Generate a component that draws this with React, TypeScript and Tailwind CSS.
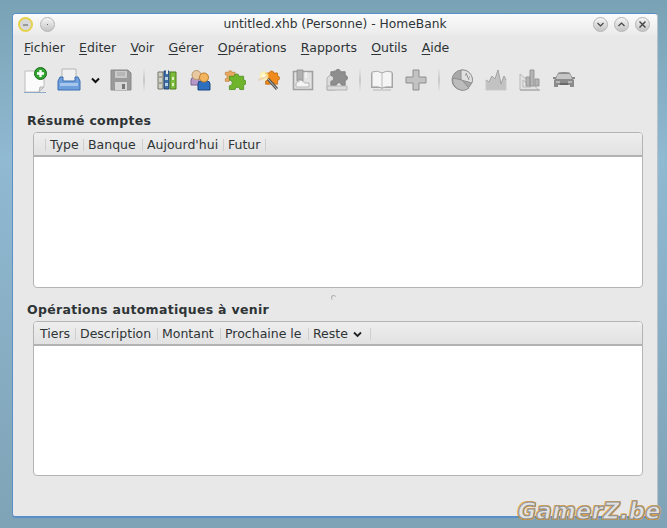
const font = '[font-family:"DejaVu_Sans",sans-serif]';

const Sep = ({ w }: { w: string }) => (
  <div className={`${w} flex justify-center`}>
    <div className="h-[24px] w-[2px] bg-gradient-to-b from-[#e8e8e8] via-[#c8c8c8] to-[#e8e8e8]" />
  </div>
);

const Slot = ({ children }: { children: React.ReactNode }) => (
  <div className="flex h-[34px] w-[34px] items-center justify-center">{children}</div>
);

const NewIcon = () => (
  <svg width="26" height="26" viewBox="0 0 26 26">
    <path d="M3 4h12l7 6v10l-5 5H3z" fill="#fbfbfb" stroke="#bdbdbd" />
    <path d="M17 25l1-5 4 0z" fill="#d8d8d8" stroke="#b5b5b5" />
    <path d="M2 25.5h22" stroke="#8fa8c8" />
    <circle cx="18.5" cy="6.5" r="6" fill="#2fa52f" stroke="#1c6a1c" />
    <path d="M18.5 3v7M15 6.5h7" stroke="#fff" strokeWidth="2.4" />
  </svg>
);
const PrintIcon = () => (
  <svg width="24" height="24" viewBox="0 0 24 24">
    <path d="M5 1h14v13H5z" fill="#f1f1f1" stroke="#b5b5b5" />
    <path d="M3 9h3v4h12V9h3l2 4v9H1v-9z" fill="#6d9fdc" stroke="#3d6fb0" />
    <path d="M3 15h18v3H3z" fill="#a7c6ec" />
  </svg>
);
const SaveIcon = () => (
  <svg width="22" height="22" viewBox="0 0 22 22">
    <path d="M1 1h17l3 3v17H1z" fill="#9a9a9a" stroke="#8a8a8a" />
    <path d="M5 2h12v7H5z" fill="#c9c9c9" />
    <path d="M7 4h8M7 6h8" stroke="#a5a5a5" />
    <path d="M5 13h12v8H5z" fill="#d6d6d6" />
    <path d="M12 15h3v5h-3z" fill="#777" />
  </svg>
);
const BooksIcon = () => (
  <svg width="20" height="22" viewBox="0 0 20 22">
    <path d="M1 3h5v17H1z" fill="#cfcfc4" stroke="#77776c" />
    <path d="M7 2h5v18H7z" fill="#3f6ea8" stroke="#23456f" />
    <path d="M13 3h6v17h-6z" fill="#7fbe3c" stroke="#4c7c1c" />
    <path d="M2 8h3M2 14h3" stroke="#77776c" />
    <path d="M8 8h3v3H8zM8 14h3v3H8z" fill="#b8cfe8" />
    <path d="M15 8h2v3h-2zM15 14h2v3h-2z" fill="#dff0c4" />
    <path d="M9 1h2v4H9z" fill="#e8e8e8" />
  </svg>
);
const PeopleIcon = () => (
  <svg width="22" height="22" viewBox="0 0 22 22">
    <path d="M1 11q0-3 4-3h4v8H1z" fill="#b598c8" stroke="#7d6292" />
    <circle cx="6.5" cy="6" r="4.5" fill="#e8c8a0" stroke="#b8986c" />
    <path d="M8 15q0-3 3-3h6q3 0 3 3v6H8z" fill="#2f6fc0" stroke="#1b4680" />
    <circle cx="14" cy="8.5" r="4.5" fill="#f2b45c" stroke="#b87a28" />
  </svg>
);
const puzzle = "M2 5h5a2.5 2.5 0 1 1 5 0h5v4a2.5 2.5 0 1 1 0 5v5h-4a2.5 2.5 0 1 0-5 0H2v-4a2.5 2.5 0 1 0 0-6z";
const PuzzleIcon = () => (
  <svg width="22" height="22" viewBox="0 0 22 22">
    <g transform="translate(0 0) scale(.65)"><path d={puzzle} fill="#e8a860" stroke="#b87c38" /></g>
    <g transform="translate(3.5 2.5) scale(.95)"><path d={puzzle} fill="#6fb52c" stroke="#4a8a1c" strokeWidth=".8" /></g>
  </svg>
);
const WandIcon = () => (
  <svg width="22" height="22" viewBox="0 0 22 22">
    <g transform="translate(6 0) scale(.8)"><path d={puzzle} fill="#f08a1c" stroke="#c06810" /></g>
    <path d="M10 10l9 10" stroke="#555" strokeWidth="3" />
    <path d="M10 10l9 10" stroke="#bbb" strokeWidth="1" />
    <circle cx="6" cy="7" r="4.5" fill="#fff3a0" opacity=".75" />
    <circle cx="6" cy="7" r="2" fill="#fffde8" />
    <path d="M0 11l8-3" stroke="#f0c8a8" strokeWidth="2" opacity=".7" />
  </svg>
);
const BudgetIcon = () => (
  <svg width="22" height="22" viewBox="0 0 22 22">
    <path d="M1.5 2.5h19v18h-19z" fill="#e2e2e2" stroke="#a0a0a0" strokeWidth="1.6" />
    <path d="M5 1h6v11l-3-2-3 2z" fill="#b0b0b0" stroke="#979797" />
    <path d="M4 18v-4l5-3 4 3h4v4z" fill="#f4f4f4" stroke="#b5b5b5" />
    <path d="M14 3v6" stroke="#fff" />
  </svg>
);
const ArchiveIcon = () => (
  <svg width="22" height="22" viewBox="0 0 22 22">
    <path d="M1 21V9l8-8v20z" fill="#dcdcdc" stroke="#b2b2b2" />
    <path d="M1 21h20v-4H1z" fill="#dcdcdc" stroke="#b2b2b2" />
    <g transform="translate(3 -2) scale(.95)"><path d={puzzle} fill="#8e8e8e" stroke="#808080" /></g>
  </svg>
);
const BookIcon = () => (
  <svg width="24" height="22" viewBox="0 0 24 22">
    <path d="M1 4v15h10l1 1 1-1h10V4h-1v14H2V4z" fill="#a2a2a2" />
    <path d="M2 3q6-2 10 1 4-3 10-1v15q-6-1-10 1-4-2-10-1z" fill="#f5f5f5" stroke="#a8a8a8" />
    <path d="M12 4v15" stroke="#b8b8b8" />
    <path d="M3 21h18" stroke="#cfcfcf" strokeWidth="2" />
  </svg>
);
const PlusIcon = () => (
  <svg width="22" height="22" viewBox="0 0 22 22">
    <path d="M8 1h6v7h7v6h-7v7H8v-7H1V8h7z" fill="#c2c2c2" stroke="#8e8e8e" />
  </svg>
);
const PieIcon = () => (
  <svg width="22" height="22" viewBox="0 0 22 22">
    <circle cx="11" cy="11" r="10" fill="#a8a8a8" stroke="#8e8e8e" />
    <path d="M10 11V1a10 10 0 0 1 11 13z" fill="#e0e0e0" stroke="#8e8e8e" />
    <path d="M2 9l9 2 7 8a10 10 0 0 1-16-10z" fill="#bcbcbc" stroke="#8e8e8e" />
    <path d="M15 4l3 7M14 6h1M18 8h1" stroke="#8e8e8e" />
  </svg>
);
const AreaIcon = () => (
  <svg width="22" height="22" viewBox="0 0 22 22">
    <path d="M1 21V11l3 2 3-6 3 3 3-9 3 14 3-8 2 4v10z" fill="#c2c2c2" stroke="#c9c9c9" />
    <path d="M1 11l3 2 3-6 3 3 3-9 3 14 3-8 2 4" fill="none" stroke="#9a9a9a" strokeWidth=".8" />
  </svg>
);
const BarsIcon = () => (
  <svg width="22" height="22" viewBox="0 0 22 22">
    <path d="M1 21V5l19 16zM4 18V11l8 7z" fill="#e2e2e2" fillRule="evenodd" stroke="#b8b8b8" />
    <path d="M1 21h20" stroke="#b0b0b0" strokeWidth="1.5" />
    <path d="M7 8h4v9H7zM11 1h4v16h-4zM16 10h4v7h-4z" fill="#b4b4b4" stroke="#979797" />
  </svg>
);
const CarIcon = () => (
  <svg width="22" height="18" viewBox="0 0 22 18">
    <path d="M1 16V9l1-1 3-6q1-1 6-1t6 1l3 6 1 1v7h-4v-2H5v2z" fill="#8b8b8b" />
    <path d="M5 3h12l2 5H3z" fill="#c6c6c6" />
    <path d="M0 6h3v2H0zM19 6h3v2h-3z" fill="#8b8b8b" />
    <path d="M3 10h4v2H3zM15 10h4v2h-4z" fill="#b8b8b8" />
    <path d="M7 12h8v2H7z" fill="#6a6a6a" />
  </svg>
);

const WinBtn = ({ children }: { children?: React.ReactNode }) => (
  <div className="flex h-[15px] w-[15px] items-center justify-center rounded-full border border-[#b4b4b4] bg-gradient-to-b from-[#f6f6f6] to-[#c4c4c4]">
    {children}
  </div>
);

const Mnemo = ({ first, rest }: { first: string; rest: string }) => (
  <span>
    <span className="underline underline-offset-2">{first}</span>
    {rest}
  </span>
);

const Col = ({ children, w }: { children?: React.ReactNode; w: string }) => (
  <div className={`flex h-[12px] items-center justify-between whitespace-nowrap border-r border-[#cfcfcf] pl-[4px] pr-[8px] ${w}`}>
    {children}
  </div>
);

const Panel = ({ children, h }: { children: React.ReactNode; h: string }) => (
  <div className={`ml-[20px] mt-[3px] flex w-[610px] flex-col overflow-hidden rounded-[4px] border border-[#b4b4b4] bg-white ${h}`}>
    <div className="flex h-[24px] items-center border-b-2 border-[#b2b2b2] bg-gradient-to-b from-[#eeeeee] to-[#e2e2e2] pt-[2px] text-[12.5px] text-[#2e3436]">
      {children}
    </div>
  </div>
);

export default function App() {
  return (
    <div className={`relative h-[528px] w-[667px] overflow-hidden bg-gradient-to-b from-[#7aa2b5] via-[#90b9d2] via-30% to-[#7fa3b6] pb-[10px] pl-[12px] pr-[9px] pt-[13px] ${font}`}>
      <div className="flex h-[505px] flex-col overflow-hidden rounded-[4px] border border-b-2 border-[#5b8fc9] border-r-[#b9c2ca] bg-[#e8e8e8]">
        <div className="grid h-[21px] shrink-0 grid-cols-[1fr_auto_1fr] items-center bg-gradient-to-b from-[#fbfbfb] to-[#ebebeb]">
          <div className="flex gap-[7px] pl-[5px]">
            <div className="flex h-[15px] w-[15px] items-center justify-center rounded-full border-2 border-[#e6d24a] bg-[#d8d8d8]">
              <div className="h-[2px] w-[5px] bg-[#999]" />
            </div>
            <WinBtn><div className="h-[1px] w-[1px] bg-[#666]" /></WinBtn>
          </div>
          <div className="text-[12.25px] text-[#2e3436]">untitled.xhb (Personne) - HomeBank</div>
          <div className="flex justify-end gap-[6px] pr-[7px]">
            <WinBtn>
              <svg width="9" height="9" viewBox="0 0 9 9"><path d="M1.5 3l3 3 3-3" fill="none" stroke="#444" strokeWidth="1.2" /></svg>
            </WinBtn>
            <WinBtn>
              <svg width="9" height="9" viewBox="0 0 9 9"><path d="M1.5 6l3-3 3 3" fill="none" stroke="#444" strokeWidth="1.2" /></svg>
            </WinBtn>
            <WinBtn>
              <svg width="9" height="9" viewBox="0 0 9 9"><path d="M1.5 1.5l6 6M7.5 1.5l-6 6" fill="none" stroke="#444" strokeWidth="1.4" /></svg>
            </WinBtn>
          </div>
        </div>

        <div className="flex h-[24px] shrink-0 items-center gap-[14.25px] pl-[11px] pt-[2px] text-[12.5px] text-[#2e3436]">
          <Mnemo first="F" rest="ichier" />
          <Mnemo first="E" rest="diter" />
          <Mnemo first="V" rest="oir" />
          <Mnemo first="G" rest="érer" />
          <Mnemo first="O" rest="pérations" />
          <Mnemo first="R" rest="apports" />
          <Mnemo first="O" rest="utils" />
          <Mnemo first="A" rest="ide" />
        </div>

        <div className="mt-[4px] flex h-[34px] shrink-0 items-center pl-[5px]">
          <Slot><NewIcon /></Slot>
          <Slot><PrintIcon /></Slot>
          <div className="flex w-[18px] justify-center">
            <svg width="9" height="7" viewBox="0 0 9 7"><path d="M1 1.5l3.5 3.5 3.5-3.5" fill="none" stroke="#111" strokeWidth="2" /></svg>
          </div>
          <Slot><SaveIcon /></Slot>
          <Sep w="w-[12px]" />
          <Slot><BooksIcon /></Slot>
          <Slot><PeopleIcon /></Slot>
          <Slot><PuzzleIcon /></Slot>
          <Slot><WandIcon /></Slot>
          <Slot><BudgetIcon /></Slot>
          <Slot><ArchiveIcon /></Slot>
          <Sep w="w-[11px]" />
          <Slot><BookIcon /></Slot>
          <Slot><PlusIcon /></Slot>
          <Sep w="w-[12px]" />
          <Slot><PieIcon /></Slot>
          <Slot><AreaIcon /></Slot>
          <Slot><BarsIcon /></Slot>
          <Slot><CarIcon /></Slot>
        </div>

        <h2 className="ml-[14px] mt-[15px] text-[12.5px] font-bold leading-[17px] tracking-[0.3px] text-[#2e3436]">Résumé comptes</h2>
        <Panel h="h-[156px]">
          <Col w="w-[12px] !p-0" />
          <Col w="w-[38px]">Type</Col>
          <Col w="w-[59px]">Banque</Col>
          <Col w="w-[81px]">Aujourd'hui</Col>
          <Col w="w-[42px]">Futur</Col>
        </Panel>

        <div className="mt-[7px] flex h-[5px] justify-center pr-[4px]">
          <div className="h-[5px] w-[5px] rounded-full border-l border-t border-[#b0b0b0]" />
        </div>

        <h2 className="ml-[14px] mt-[1px] text-[12.5px] font-bold leading-[17px] tracking-[0.3px] text-[#2e3436]">Opérations automatiques à venir</h2>
        <Panel h="h-[155px]">
          <Col w="w-[42px] !pl-[6px]">Tiers</Col>
          <Col w="w-[82px]">Description</Col>
          <Col w="w-[63px]">Montant</Col>
          <Col w="w-[88px]">Prochaine le</Col>
          <Col w="w-[62px]">
            Reste
            <svg width="9" height="7" viewBox="0 0 9 7"><path d="M1 1.5l3.5 3.5 3.5-3.5" fill="none" stroke="#222" strokeWidth="1.8" /></svg>
          </Col>
        </Panel>
      </div>

      <div className="absolute bottom-[4px] right-[6px] text-[22.5px] font-bold italic leading-[26px] tracking-[0.4px] text-[#e2e2e2] [-webkit-text-stroke:1px_#8f8f8f] [text-shadow:1px_1px_0_#d8952f,-1px_-1px_0_#e3a848,1px_-1px_0_#e3a848,-1px_1px_0_#d8952f]">
        GamerZ.be
      </div>
    </div>
  );
}
